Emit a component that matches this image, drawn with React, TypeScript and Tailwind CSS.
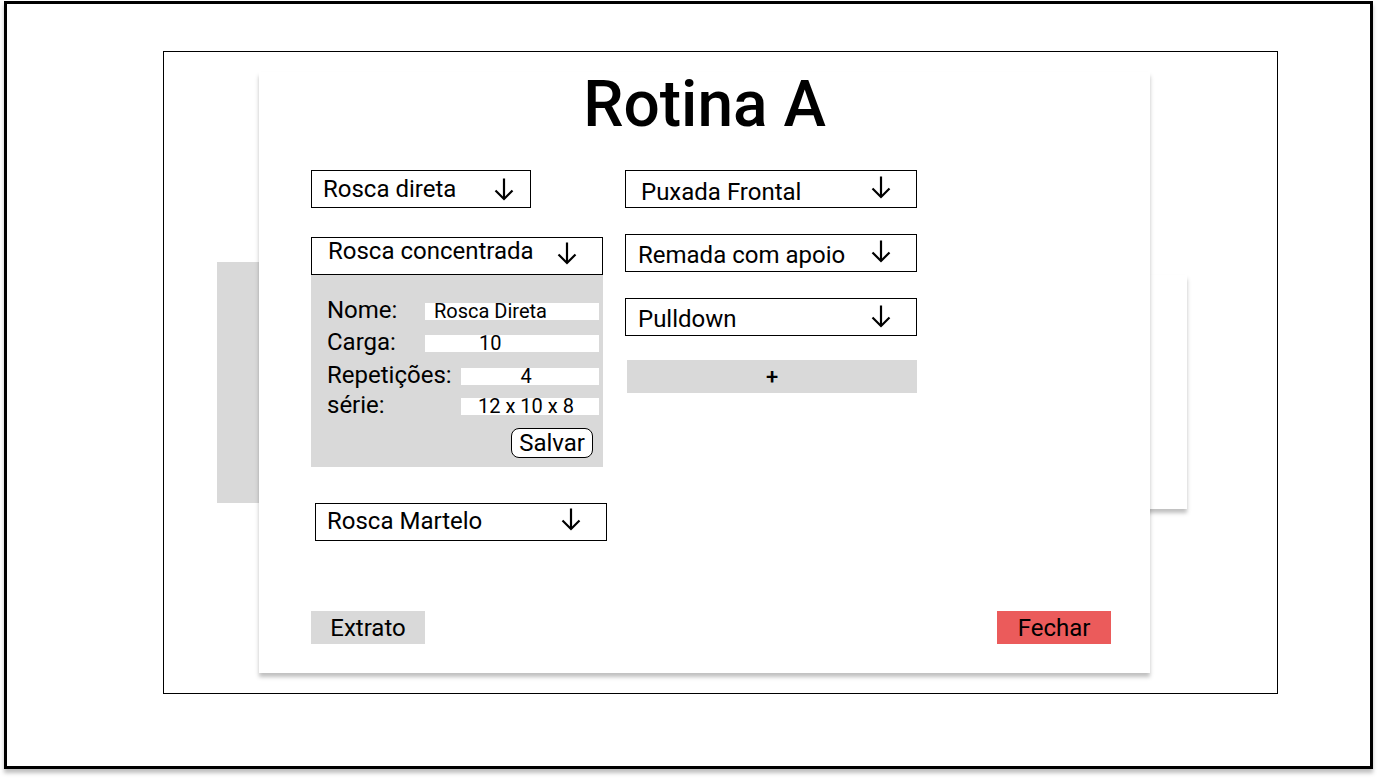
import React from "react";

type DropdownProps = {
  label: string;
  boxClass: string;
  textClass: string;
  arrowClass: string;
};

function ArrowDown({ className }: { className: string }) {
  return (
    <svg
      width="22"
      height="24"
      viewBox="0 0 22 24"
      fill="none"
      stroke="#000"
      strokeWidth="2.2"
      className={className}
    >
      <path d="M11 1.5V22" />
      <path d="M2.5 13.5L11 22L19.5 13.5" />
    </svg>
  );
}

function Dropdown({ label, boxClass, textClass, arrowClass }: DropdownProps) {
  return (
    <div className={`flex items-start h-[38px] border border-black bg-white ${boxClass}`}>
      <span className={`text-[24px] leading-none whitespace-nowrap ${textClass}`}>{label}</span>
      <ArrowDown className={`ml-auto shrink-0 ${arrowClass}`} />
    </div>
  );
}

function FieldRow({
  label,
  value,
  rowClass,
  labelClass,
  inputClass,
}: {
  label: string;
  value: string;
  rowClass: string;
  labelClass: string;
  inputClass: string;
}) {
  return (
    <div className={`flex items-baseline ${rowClass}`}>
      <span className={`text-[24px] leading-none shrink-0 ${labelClass}`}>{label}</span>
      <div className={`bg-white h-[17px] text-[20px] leading-[17px] whitespace-nowrap ${inputClass}`}>
        {value}
      </div>
    </div>
  );
}

export default function App() {
  return (
    <div
      className="relative w-[1378px] h-[780px] bg-white overflow-hidden pt-[1px] pl-[4px] text-black"
      style={{ fontFamily: "Roboto, 'Liberation Sans', sans-serif" }}
    >
      {/* outer frame */}
      <div className="w-[1369px] h-[768px] border-[3px] border-black shadow-[0_4px_4px_rgba(0,0,0,0.25)]">
        {/* inner frame */}
        <div className="ml-[156px] mt-[47px] w-[1115px] h-[643px] border border-black">
          {/* background screen behind the modal */}
          <div className="flex items-start mt-[210px] ml-[53px]">
            <div className="w-[483px] h-[241px] bg-[#d9d9d9]" />
            <div className="w-[487px] h-[234px] mt-[13px] bg-white shadow-[0_4px_4px_rgba(0,0,0,0.25)]" />
          </div>
        </div>
      </div>

      {/* modal */}
      <div className="absolute left-[259px] top-[72px] w-[891px] h-[601px] bg-white shadow-[0_4px_4px_rgba(0,0,0,0.25)] flex flex-col">
        <h1 className="mt-[1px] text-center text-[64px] leading-none font-medium">Rotina A</h1>

        <div className="flex mt-[33px] pl-[52px]">
          {/* left column */}
          <div className="flex flex-col w-[296px]">
            <Dropdown
              label="Rosca direta"
              boxClass="w-[220px]"
              textClass="ml-[11px] mt-[6px]"
              arrowClass="mr-[15px] mt-[6px]"
            />
            <Dropdown
              label="Rosca concentrada"
              boxClass="w-[292px] mt-[29px]"
              textClass="ml-[16px] mt-[1px]"
              arrowClass="mr-[24px] mt-[3px]"
            />
            <div className="w-[292px] h-[192px] bg-[#d9d9d9] pt-[23px] pl-[16px] pr-[4px] flex flex-col">
              <FieldRow
                label="Nome:"
                value="Rosca Direta"
                rowClass=""
                labelClass="w-[98px]"
                inputClass="flex-1 pl-[9px]"
              />
              <FieldRow
                label="Carga:"
                value="10"
                rowClass="mt-[8px]"
                labelClass="w-[98px]"
                inputClass="flex-1 pl-[54px]"
              />
              <FieldRow
                label="Repetições:"
                value="4"
                rowClass="mt-[9px]"
                labelClass="w-[134px]"
                inputClass="flex-1 text-center pr-[8px]"
              />
              <FieldRow
                label="série:"
                value="12 x 10 x 8"
                rowClass="mt-[6px]"
                labelClass="w-[134px]"
                inputClass="flex-1 text-center pr-[8px]"
              />
              <div className="flex justify-end mt-[11px] pr-[6px]">
                <button className="h-[30px] px-[7px] border border-black rounded-[8px] bg-white text-[24px] leading-none">
                  Salvar
                </button>
              </div>
            </div>
            <Dropdown
              label="Rosca Martelo"
              boxClass="w-[292px] mt-[36px] ml-[4px]"
              textClass="ml-[11px] mt-[5px]"
              arrowClass="mr-[24px] mt-[3px]"
            />
          </div>

          {/* right column */}
          <div className="flex flex-col ml-[18px]">
            <Dropdown
              label="Puxada Frontal"
              boxClass="w-[292px]"
              textClass="ml-[15px] mt-[9px]"
              arrowClass="mr-[24px] mt-[4px]"
            />
            <Dropdown
              label="Remada com apoio"
              boxClass="w-[292px] mt-[26px]"
              textClass="ml-[12px] mt-[8px]"
              arrowClass="mr-[24px] mt-[4px]"
            />
            <Dropdown
              label="Pulldown"
              boxClass="w-[292px] mt-[26px]"
              textClass="ml-[12px] mt-[8px]"
              arrowClass="mr-[24px] mt-[5px]"
            />
            <button className="w-[290px] h-[33px] mt-[24px] ml-[2px] bg-[#d9d9d9] text-[22px] font-medium leading-none">
              +
            </button>
          </div>
        </div>

        <div className="mt-auto mb-[29px] flex justify-between pl-[52px] pr-[39px]">
          <button className="w-[114px] h-[33px] bg-[#d9d9d9] text-[24px] leading-none">Extrato</button>
          <button className="w-[114px] h-[33px] bg-[#eb5b5b] text-[24px] leading-none">Fechar</button>
        </div>
      </div>
    </div>
  );
}
